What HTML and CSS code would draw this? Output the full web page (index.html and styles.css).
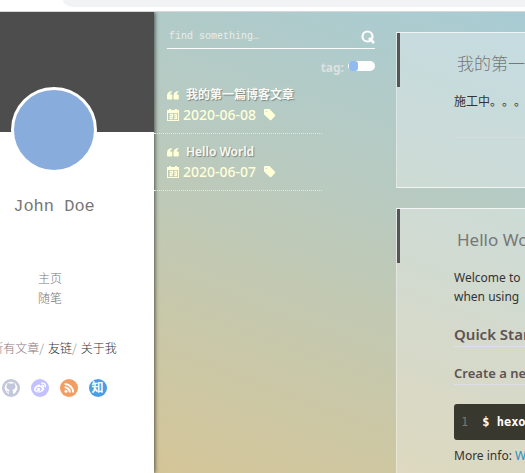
FILE: index.html
```html
<!DOCTYPE html>
<html lang="zh-CN">
<head>
<meta charset="utf-8">
<title>Hexo</title>
<link rel="stylesheet" href="styles.css">
</head>
<body>
<div class="chrome"><div class="address"></div></div>
<div class="page">
  <aside class="sidebar">
    <div class="cover"></div>
    <div class="profile">
      <div class="avatar"></div>
      <h1 class="author">John Doe</h1>
      <nav class="menu"><a href="#home">主页</a><a href="#essay">随笔</a></nav>
      <nav class="switch"><a class="current" href="#all">所有文章</a><span class="slash">/</span><a href="#friends">友链</a><span class="slash">/</span><a href="#about">关于我</a></nav>
      <div class="social">
        <a class="github" href="#github" aria-label="GitHub"><svg viewBox="0 0 18 18"><circle cx="9" cy="9" r="6.300" fill="#fff"/><path fill="#c3c7dc" d="M5.400 5.100V3.700l2 .9q1.600-.4 3.200 0l2-.9v1.400q1 1.200.9 2.500-.2 2.900-3.200 3.200.7.600.7 1.500V16H7v-2.500q-1.800.3-2.600-1.500l-.5-.6q1-.2 1.500.8.600.6 1.600.3 0-.9.700-1.600-3-.4-3.200-3.200-.1-1.400.9-2.600z"/></svg></a>
        <a class="weibo" href="#weibo" aria-label="Weibo"><svg viewBox="0 0 18 18"><path fill="#fff" fill-rule="evenodd" d="M7.800 5.500c1-.2 1.400.4 1.100 1.300 1.800-.7 3.200-.3 2.700 1.200 1.500.5 2 1.300 1.500 2.600-.8 1.900-3.200 3-5.700 2.900-2.500-.1-4.500-1.400-4.400-3.200.1-1.900 2.600-4.400 4.800-4.800zM4.700 10.600c.1 1.300 1.500 2 3.200 1.800s3.100-1.300 3-2.600-1.500-2-3.200-1.800-3.100 1.300-3 2.600z"/><circle cx="7.500" cy="10.500" r="1.700" fill="#fff"/><path fill="none" stroke="#fff" stroke-width="1.400" stroke-linecap="round" d="M10.700 4.200c2.400-.5 4.300 1.300 3.700 3.700M11.100 6.100c1-.1 1.600.5 1.500 1.400"/></svg></a>
        <a class="rss" href="#rss" aria-label="RSS"><svg viewBox="0 0 18 18"><circle cx="6" cy="12.200" r="1.500" fill="#fff"/><path fill="none" stroke="#fff" stroke-width="2" d="M4.600 8.200a5.300 5.300 0 0 1 5.300 5.300M4.600 4.900a8.600 8.600 0 0 1 8.600 8.600"/></svg></a>
        <a class="zhihu" href="#zhihu">知</a>
      </div>
    </div>
  </aside>
  <section class="finder">
    <div class="search">
      <input type="search" aria-label="搜索" placeholder="find something…">
      <button type="button" aria-label="搜索"><svg viewBox="0 0 14 14"><circle cx="6.500" cy="6.500" r="5" fill="none" stroke="#fff" stroke-width="2.200"/><path d="M8 8l5 5" stroke="#fff" stroke-width="2.600"/></svg></button>
    </div>
    <div class="tagline"><label for="tags">tag:</label><input id="tags" type="checkbox" class="toggle"></div>
    <ul class="posts">
      <li><a href="#first"><svg class="quote" viewBox="0 0 12 9"><path d="M4.800 0v1.200Q3.300 1.800 3.100 3.500h1.400q.8 0 .8.800v3.400q0 .8-.8.800H.8Q0 8.500 0 7.700V4.500Q.2.700 4.800 0zM11.300 0v1.200Q9.800 1.800 9.600 3.500H11q.8 0 .8.800v3.400q0 .8-.8.800H7.300q-.8 0-.8-.8V4.500Q6.700.7 11.300 0z"/></svg>我的第一篇博客文章</a>
        <div class="meta"><svg class="cal" viewBox="0 0 12 12"><path fill-rule="evenodd" d="M0 1h2V0h2v1h4V0h2v1h2v11H0zM1 4v7h10V4z"/><path fill="none" stroke="#ffffd8" stroke-width="1.300" d="M2.500 5.500h3v2H3.200v2h2.600M7 5.500h2.500v4H7M7.500 7.500h2"/></svg><time>2020-06-08</time><svg class="tag" viewBox="0 0 12 12"><path fill-rule="evenodd" d="M0 1q0-1 1-1h4.500L11 5.700q.7.700 0 1.400L7.300 11q-.7.700-1.400 0L0 5.500zM2.300 1.700a.6.600 0 1 0 0 1.200.6.600 0 0 0 0-1.200z"/></svg></div></li>
      <li><a href="#hello"><svg class="quote" viewBox="0 0 12 9"><path d="M4.800 0v1.200Q3.300 1.800 3.100 3.500h1.400q.8 0 .8.800v3.400q0 .8-.8.800H.8Q0 8.500 0 7.700V4.500Q.2.700 4.800 0zM11.300 0v1.200Q9.800 1.800 9.600 3.500H11q.8 0 .8.800v3.400q0 .8-.8.800H7.300q-.8 0-.8-.8V4.500Q6.700.7 11.300 0z"/></svg>Hello World</a>
        <div class="meta"><svg class="cal" viewBox="0 0 12 12"><path fill-rule="evenodd" d="M0 1h2V0h2v1h4V0h2v1h2v11H0zM1 4v7h10V4z"/><path fill="none" stroke="#ffffd8" stroke-width="1.300" d="M2.500 5.500h3v2H3.200v2h2.600M7 5.500h2.500v4H7M7.500 7.500h2"/></svg><time>2020-06-07</time><svg class="tag" viewBox="0 0 12 12"><path fill-rule="evenodd" d="M0 1q0-1 1-1h4.500L11 5.700q.7.700 0 1.400L7.300 11q-.7.700-1.400 0L0 5.500zM2.300 1.700a.6.600 0 1 0 0 1.200.6.600 0 0 0 0-1.200z"/></svg></div></li>
    </ul>
  </section>
  <main class="articles">
    <article id="first">
      <h2>我的第一篇博客文章</h2>
      <div class="body short"><p>施工中。。。</p></div>
    </article>
    <article id="hello">
      <h2>Hello World</h2>
      <div class="body">
        <p>Welcome to<br>when using</p>
        <h3>Quick Start</h3>
        <h4>Create a new post</h4>
        <pre><span class="line">1</span><code>$ hexo new</code></pre>
        <p>More info: <a href="#writing">Writing</a></p>
      </div>
    </article>
  </main>
</div>
</body>
</html>
```

FILE: styles.css
```css
* { box-sizing: border-box; }
body {
  margin: 0;
  height: 100vh;
  display: flex;
  flex-direction: column;
  overflow: hidden;
  font: 12px/20px "Noto Sans", "Noto Sans CJK SC", sans-serif;
}
a { color: inherit; text-decoration: none; }
svg { display: block; }
h1, h2, h3, h4, p, pre, ul { margin: 0; padding: 0; font-weight: normal; }
.chrome { flex: none; height: 12px; background: #fff; border-bottom: 1px solid #d4d8da; }
.address { height: 7px; margin-left: 63px; background: #f1f3f4; border-bottom-left-radius: 12px 7px; }
.page {
  flex: 1;
  min-height: 0;
  display: flex;
  overflow: hidden;
  background: linear-gradient(200deg, #a8ccd4 0%, #b9cabf 38%, #c8c8aa 66%, #d2c69c 86%, #d9c491 100%);
}

.sidebar { flex: none; width: 154px; background: #fff; box-shadow: 1px 0 4px #0009; }
.cover { height: 120px; background: #4d4d4d; }
.profile { width: 108px; display: flex; flex-direction: column; align-items: center; }
.avatar { width: 86px; height: 86px; margin-top: -45px; border: 3px solid #fff; border-radius: 50%; background: #88acdb; }
.author { margin-top: 21px; font: 17px/26px "Liberation Mono", monospace; color: #777; white-space: nowrap; }
.menu { margin-top: 48px; margin-right: 8px; display: flex; flex-direction: column; color: #777; font-weight: 300; }
.menu, .switch { font-family: "Noto Sans CJK SC", sans-serif; }
.switch { margin-top: 30px; display: flex; white-space: nowrap; color: #333; font-weight: 300; }
.switch .current { color: #8f7581; }
.slash { margin-right: 4px; color: #888; }
.social { margin-top: 21px; display: flex; gap: 11px; }
.social a { width: 18px; height: 18px; border-radius: 50%; }
.github { background: #c3c7dc; }
.weibo { background: #c3c1ff; }
.rss { background: #f49d62; }
.zhihu { background: #4a9ee3; color: #fff; font-size: 12px; font-weight: bold; line-height: 17px; text-align: center; }

.finder { flex: none; width: 242px; padding-top: 14px; }
.search { height: 23px; margin: 0 21px 0 13px; display: flex; align-items: center; border-bottom: 1px solid #fff; }
.search input { flex: 1; min-width: 0; padding: 0 2px; border: 0; outline: 0; background: none; color: #fff; font: 10px/20px "Liberation Mono", monospace; }
.search input::placeholder { color: #e9eeea; }
.search button { width: 14px; height: 14px; padding: 0; border: 0; background: none; }
.tagline { height: 18px; margin: 10px 21px 0 0; display: flex; justify-content: flex-end; gap: 4px; }
.tagline label { color: #dde0e0; font-size: 12px; font-weight: bold; line-height: 18px; }
.toggle { appearance: none; width: 27px; height: 10px; margin: 2px 0 0; border-radius: 5px; background: #fff; }
.toggle::before { content: ""; display: block; width: 9px; height: 10px; margin-left: 1px; border-radius: 3px; background: #91baf0; }
.posts { width: 168px; list-style: none; }
.posts li { height: 57px; padding: 8px 0 0 13px; border-bottom: 1px dotted #e4e9df; }
.posts a { display: flex; align-items: center; gap: 7px; color: #fafaf5; font-weight: 600; line-height: 20px; text-shadow: 1px 1px 1px #0005; white-space: nowrap; }
.posts svg { fill: #ffffd8; }
.quote { width: 12px; height: 9px; }
.meta { display: flex; align-items: center; gap: 4px; color: #ffffd8; font-weight: 500; font-size: 14px; line-height: 20px; }
.cal, .tag { width: 12px; height: 12px; }
.tag { margin-left: 4px; }

.articles { flex: 1; min-width: 0; padding-top: 20px; }
.articles article { margin: 0 -30px 20px 0; padding-bottom: 49px; border: 1px solid #fffb; border-left-color: #fff5; background: #ffffff52; white-space: nowrap; overflow: hidden; color: #333; }
.articles h2 { height: 54px; padding: 6px 0 0 57px; border-left: 3px solid #555; color: #777; font-size: 17px; line-height: 50px; }
.articles #first h2 { font-weight: 300; }
.body { padding: 5px 0 0 57px; }
.body p { line-height: 19px; }
.short p { height: 46px; border-bottom: 1px solid #ddd9; text-spacing-trim: space-all; }
.body h3, .body h4 { color: #5e5353; font-weight: 600; border-bottom: 1px solid #dde; }
.body h3 { margin-top: 16px; font-size: 15px; line-height: 24px; }
.body h4 { margin-top: 16px; font-size: 13px; line-height: 21px; }
.body pre { height: 36px; margin: 19px 0 6px; padding: 0 7px; display: flex; gap: 14px; border-radius: 3px; background: #38382f; color: #fff; font: bold 12px/36px "DejaVu Sans Mono", monospace; }
.line { color: #77776e; font-weight: normal; }
.body a { color: #258fc8; }
```
